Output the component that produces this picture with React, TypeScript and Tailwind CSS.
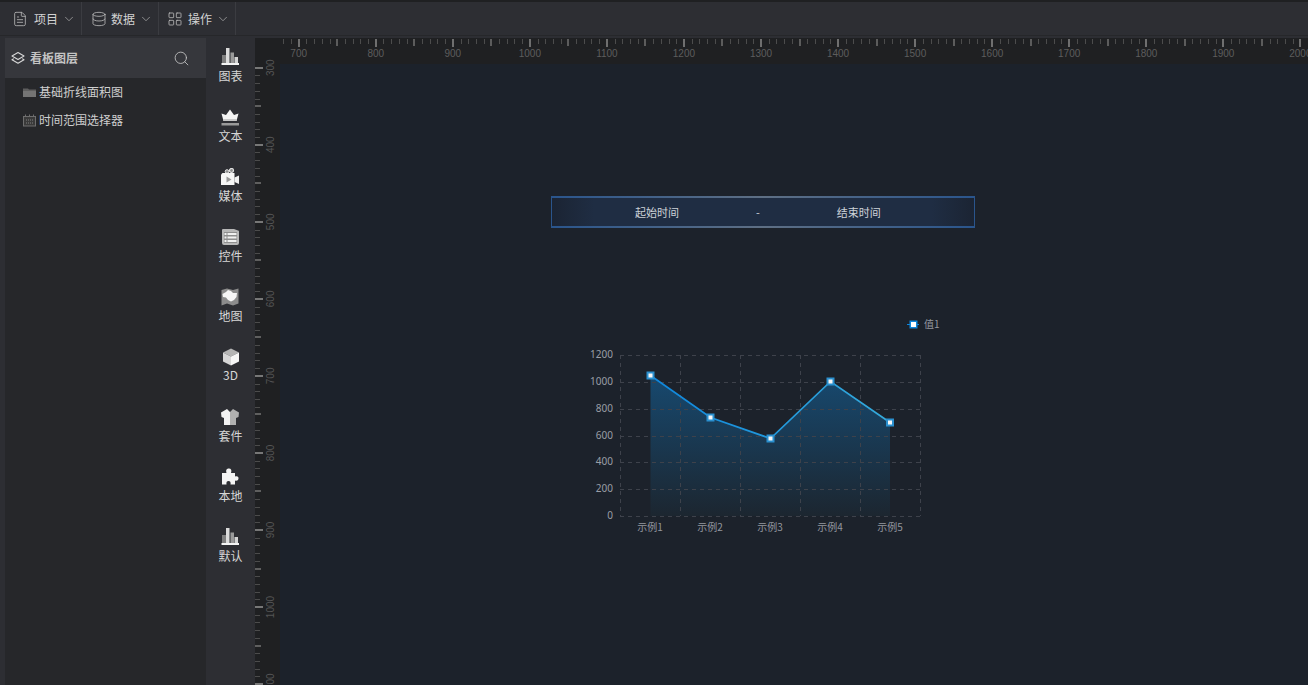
import type { ReactNode } from "react";
import { ChevronDown, Database, FileText, LayoutGrid, Search } from "lucide-react";

const font = { fontFamily: '"Noto Sans CJK SC", "Noto Sans", sans-serif' };

function Bars() {
  return (
    <svg width="18" height="18" viewBox="0 0 18 18">
      <rect x="0.5" y="15" width="17.5" height="2" fill="#f4f4f4" />
      <rect x="1" y="7" width="4" height="8" fill="#7e7e7e" />
      <rect x="5" y="0" width="3.5" height="15" fill="#dcdcdc" />
      <rect x="9.5" y="4.5" width="3.5" height="10.5" fill="#9a9a9a" />
      <rect x="13.5" y="9" width="3.5" height="6" fill="#d4d4d4" />
    </svg>
  );
}
function Crown() {
  return (
    <svg width="18" height="18" viewBox="0 0 18 18">
      <path d="M9 1.5 L13 7 L17.5 5.5 L15.5 13 H2.5 L0.5 5.5 L5 7 Z" fill="#f4f4f4" />
      <path d="M2 11 H16 L15.5 13 H2.5 Z" fill="#c8c8c8" />
      <rect x="0.5" y="15" width="17.5" height="2.5" fill="#9a9a9a" />
    </svg>
  );
}
function Media() {
  return (
    <svg width="18" height="18" viewBox="0 0 18 18">
      <circle cx="6" cy="3.5" r="1.8" fill="#8d8d8d" stroke="#e4e4e4" strokeWidth="1" />
      <circle cx="10.5" cy="2.5" r="2" fill="#8d8d8d" stroke="#e4e4e4" strokeWidth="1.2" />
      <path d="M1.5 5 H13.5 V17 H0 V6.5 Z" fill="#f6f6f6" />
      <path d="M13.5 9.5 L18 7.5 V16 L13.5 14 Z" fill="#f0f0f0" />
      <path d="M5.5 8.5 L10.5 11.5 L5.5 14.5 Z" fill="#9a9a9a" />
    </svg>
  );
}
function Control() {
  return (
    <svg width="18" height="18" viewBox="0 0 18 18">
      <path d="M2 1 H13 L17 2.5 A1 1 0 0 1 18 3.5 V15 A2 2 0 0 1 16 17 H3 A2 2 0 0 1 1 15 V2 A1 1 0 0 1 2 1 Z" fill="#b8b8b8" />
      <rect x="3" y="4" width="13" height="11" fill="#8e8e8e" />
      <rect x="3.5" y="5" width="2" height="2" fill="#f0f0f0" />
      <rect x="6.5" y="5" width="9" height="2" fill="#f0f0f0" />
      <rect x="3.5" y="8.5" width="2" height="2" fill="#f0f0f0" />
      <rect x="6.5" y="8.5" width="9" height="2" fill="#f0f0f0" />
      <rect x="3.5" y="12" width="2" height="2" fill="#f0f0f0" />
      <rect x="6.5" y="12" width="9" height="2" fill="#f0f0f0" />
    </svg>
  );
}
function MapIcon() {
  return (
    <svg width="18" height="18" viewBox="0 0 18 18">
      <path d="M0.5 2 L6 0.5 L12 2 L17.5 0.5 V15.5 L12 17.5 L6 15.5 L0.5 17.5 Z" fill="#8c8c8c" />
      <path d="M1.5 6 L5 4 L7 2 L10 3 L12 5 L16 5 L15.5 9 L13 12 L10 13.5 L7 12 L5 9.5 L2 9 Z" fill="#f6f6f6" />
    </svg>
  );
}
function Cube() {
  return (
    <svg width="18" height="18" viewBox="0 0 18 18">
      <path d="M9 0.5 L17 4.5 L9 8.5 L1 4.5 Z" fill="#b4b4b4" />
      <path d="M1 4.5 L9 8.5 V17.5 L1 13.5 Z" fill="#d6d6d6" />
      <path d="M17 4.5 L9 8.5 V17.5 L17 13.5 Z" fill="#f6f6f6" />
    </svg>
  );
}
function Shirt() {
  return (
    <svg width="18" height="18" viewBox="0 0 18 18">
      <path d="M6 1 L0 4.5 L0.5 9 L3 10 V17 H9 V4 Z" fill="#f2f2f2" />
      <path d="M12 1 L18 4.5 L17.5 9 L15 10 V17 H9 V4 Z" fill="#b0b0b0" />
    </svg>
  );
}
function Puzzle() {
  return (
    <svg width="18" height="18" viewBox="0 0 18 18">
      <path
        d="M1 5 H5.5 C4.5 1.5 6 0.5 8 0.5 C10 0.5 11 2 10 5 H14 V8.5 C16.5 7.5 17.8 9 17.5 10.5 C17.3 12.5 15.8 13 14 12.5 V16.5 H9.5 C10 14 9 13 7.5 13 C6 13 5 14 5.5 16.5 H1 Z"
        fill="#f4f4f4"
      />
    </svg>
  );
}

const tools: [string, () => ReactNode][] = [
  ["图表", Bars],
  ["文本", Crown],
  ["媒体", Media],
  ["控件", Control],
  ["地图", MapIcon],
  ["3D", Cube],
  ["套件", Shirt],
  ["本地", Puzzle],
  ["默认", Bars],
];

function MenuButton({ icon, label, box, gap }: { icon: ReactNode; label: string; box: string; gap: string }) {
  return (
    <div className={`flex h-full items-center border-r border-[#3b3c41] ${box}`}>
      {icon}
      <span className={`whitespace-nowrap text-[12px] text-[#d2d2d2] ${gap}`}>{label}</span>
      <ChevronDown size={14} className="ml-[4px] shrink-0 text-[#a9a9a9]" strokeWidth={1.3} />
    </div>
  );
}

function HRuler() {
  const ticks = [];
  for (let v = 670; v <= 2010; v += 10) {
    const x = 298.7 + ((v - 700) * 77.05) / 100 - 280;
    const major = v % 100 === 0;
    const mid = v % 50 === 0;
    ticks.push(
      <rect
        key={v}
        x={Math.round(x) - (major || mid ? 1 : 0)}
        y={1}
        width={major || mid ? 2 : 1}
        height={major ? 8 : mid ? 7 : 5}
        fill={major ? "#6f6f6f" : mid ? "#5c5c5c" : "#4c4c4c"}
      />
    );
    if (major)
      ticks.push(
        <text key={`t${v}`} x={x} y={19} textAnchor="middle" fontSize="10" fill="#5d5d5d" fontFamily="Liberation Sans">
          {v}
        </text>
      );
  }
  return (
    <svg className="block" width="1028" height="26">
      {ticks}
    </svg>
  );
}

function VRuler() {
  const ticks = [];
  for (let v = 300; v <= 1100; v += 10) {
    const y = 67.7 + ((v - 300) * 77.05) / 100 - 64;
    const major = v % 100 === 0;
    const mid = v % 50 === 0;
    ticks.push(
      <rect
        key={v}
        x={0}
        y={Math.round(y) - (major || mid ? 1 : 0)}
        width={major ? 8 : mid ? 6 : 5}
        height={major || mid ? 2 : 1}
        fill={major ? "#777777" : mid ? "#5f5f5f" : "#4c4c4c"}
      />
    );
    if (major)
      ticks.push(
        <text
          key={`t${v}`}
          transform={`translate(18.5 ${y}) rotate(-90)`}
          textAnchor="middle"
          fontSize="10"
          fill="#555555"
          fontFamily="Liberation Sans"
        >
          {v}
        </text>
      );
  }
  return (
    <svg className="block overflow-visible" width="25" height="621">
      {ticks}
    </svg>
  );
}

function Chart() {
  const pts = [
    [30.5, 20.5],
    [90.5, 62.5],
    [150.5, 83.5],
    [210.5, 26.5],
    [270, 67.5],
  ];
  const line = pts.map((p) => p.join(",")).join(" ");
  const ys = [0, 27, 54, 81, 107, 134, 161];
  const xs = [0.5, 60.5, 120.5, 180.5, 240.5, 300.5];
  const yLabels = ["1200", "1000", "800", "600", "400", "200", "0"];
  return (
    <svg className="absolute left-[305px] top-[291px] overflow-visible" width="350" height="190" viewBox="-35 0 350 190">
      <defs>
        <linearGradient id="area" x1="0" y1="0" x2="0" y2="1">
          <stop offset="0" stopColor="#17496f" />
          <stop offset="1" stopColor="#1c2630" />
        </linearGradient>
        <linearGradient id="stroke" x1="0" y1="0" x2="1" y2="0">
          <stop offset="0" stopColor="#0e86dc" />
          <stop offset="1" stopColor="#35aadb" />
        </linearGradient>
      </defs>
      <polygon points={`30.5,20.5 ${line} 270,161 30.5,161`} fill="url(#area)" />
      {ys.map((y) => (
        <line key={y} x1="0" x2="300.5" y1={y + 0.5} y2={y + 0.5} stroke="#3e424b" strokeDasharray="4 4" />
      ))}
      {xs.map((x) => (
        <line key={x} x1={x} x2={x} y1="0" y2="161" stroke="#3e424b" strokeDasharray="4 4" />
      ))}
      <polyline points={line} fill="none" stroke="url(#stroke)" strokeWidth="1.7" />
      {pts.map(([x, y]) => (
        <g key={x}>
          <rect x={x - 4} y={y - 4} width="8" height="8" fill="#2a90cf" />
          <rect x={x - 2} y={y - 2} width="4" height="4" fill="#f6f6f6" />
        </g>
      ))}
      {yLabels.map((t, i) => (
        <text key={t} x="-7" y={ys[i] + 2.5} textAnchor="end" fontSize="10" fill="#9a9ea6" fontFamily="Noto Sans">
          {t}
        </text>
      ))}
      {["示例1", "示例2", "示例3", "示例4", "示例5"].map((t, i) => (
        <text key={t} x={30 + i * 60} y="176" textAnchor="middle" fontSize="10" fill="#93979f" style={font}>
          {t}
        </text>
      ))}
      <line x1="287" x2="299" y1="-30.5" y2="-30.5" stroke="#0e86dc" />
      <rect x="289.5" y="-34.5" width="8" height="8" fill="#0e86dc" />
      <rect x="291" y="-33" width="5" height="5" fill="#ffffff" />
      <text x="304" y="-27" fontSize="10" fill="#93979f" style={font}>
        值1
      </text>
    </svg>
  );
}

export default function App() {
  return (
    <div className="flex h-[685px] w-[1308px] flex-col overflow-hidden bg-[#2d2e33]" style={font}>
      <div className="h-[2px] shrink-0 bg-[#1f2022]" />
      <div className="flex h-[34px] shrink-0 items-stretch border-b border-[#26272a]">
        <MenuButton box="w-[82px] pl-[12px]" gap="ml-[6px]" label="项目" icon={<FileText size={16} strokeWidth={1.2} className="shrink-0 text-[#bdbdbd]" />} />
        <MenuButton box="w-[77px] pl-[9px]" gap="ml-[4px]" label="数据" icon={<Database size={16} strokeWidth={1.2} className="shrink-0 text-[#bdbdbd]" />} />
        <MenuButton box="w-[77px] pl-[8px]" gap="ml-[5px]" label="操作" icon={<LayoutGrid size={16} strokeWidth={1.2} className="shrink-0 text-[#bdbdbd]" />} />
      </div>
      <div className="flex min-h-0 flex-1 pt-[2px]">
        <div className="ml-[5px] flex w-[201px] shrink-0 flex-col bg-[#26272a]">
          <div className="flex h-[40px] items-center bg-[#36373c] pl-[6px] pr-[16px]">
            <svg width="14" height="14" viewBox="0 0 14 14" fill="none" stroke="#d8d8d8" strokeWidth="1.1" strokeLinejoin="round">
              <path d="M7 1.5 L13 5 L7 8.5 L1 5 Z" />
              <path d="M2.8 7.6 L1 8.8 L7 12.3 L13 8.8 L11.2 7.6" />
            </svg>
            <span className="ml-[5px] flex-1 text-[12px] font-bold text-[#c4c4c4]">看板图层</span>
            <Search size={17} strokeWidth={1.2} className="text-[#c4c4c4]" />
          </div>
          <div className="flex h-[28px] items-center pl-[18px]">
            <svg width="13" height="13" viewBox="0 0 13 13">
              <path d="M0 2.5 H5 L6 3.5 H13 V11 H0 Z" fill="#5e5e5e" />
              <path d="M0 5 H13 V11 H0 Z" fill="#747474" />
            </svg>
            <span className="ml-[3px] text-[12px] text-[#cfcfcf]">基础折线面积图</span>
          </div>
          <div className="flex h-[28px] items-center pl-[18px]">
            <svg width="13" height="13" viewBox="0 0 13 13">
              <path d="M2.5 0.5 V3 M6.5 0.5 V3 M10.5 0.5 V3" stroke="#6e6e6e" />
              <rect x="0.5" y="2.5" width="12" height="9.5" fill="#3a3a3a" stroke="#6e6e6e" />
              <path d="M3 6 H10 M3 9 H10" stroke="#808080" strokeDasharray="1 1" />
            </svg>
            <span className="ml-[3px] text-[12px] text-[#cfcfcf]">时间范围选择器</span>
          </div>
        </div>
        <div className="flex w-[49px] shrink-0 flex-col items-center pt-[10px]">
          {tools.map(([label, Icon]) => (
            <div key={label} className="flex h-[60px] flex-col items-center">
              <Icon />
              <span className={`text-[12px] leading-[18px] text-[#d6d6d6] ${label === "3D" ? "mt-0" : "mt-[1px]"}`}>{label}</span>
            </div>
          ))}
        </div>
        <div className="flex min-w-0 flex-1 flex-col">
          <div className="flex h-[26px] shrink-0 bg-[#1f2022]">
            <div className="w-[25px] shrink-0" />
            <HRuler />
          </div>
          <div className="flex min-h-0 flex-1">
            <div className="w-[25px] shrink-0 bg-[#1f2022]">
              <VRuler />
            </div>
            <div className="relative min-w-0 flex-1 bg-[#1c222b]">
              <div className="absolute left-[271px] top-[132px] flex h-[32px] w-[424px] items-center border-x border-[#2a558c] bg-[linear-gradient(90deg,#1b2433,#1f2d43_10%,#1f2d43_90%,#1b2433)] text-[11px] text-[#cdd2d8]">
                <div className="absolute inset-x-0 top-0 h-[2px] bg-[linear-gradient(90deg,#2a558c,#5e6f84_50%,#2a558c)]" />
                <div className="absolute inset-x-0 bottom-0 h-[2px] bg-[linear-gradient(90deg,#2a558c,#5e6f84_50%,#2a558c)]" />
                <span className="w-[204px] pl-[83px]">起始时间</span>
                <span>-</span>
                <span className="pl-[77px]">结束时间</span>
              </div>
              <Chart />
            </div>
          </div>
        </div>
      </div>
    </div>
  );
}
